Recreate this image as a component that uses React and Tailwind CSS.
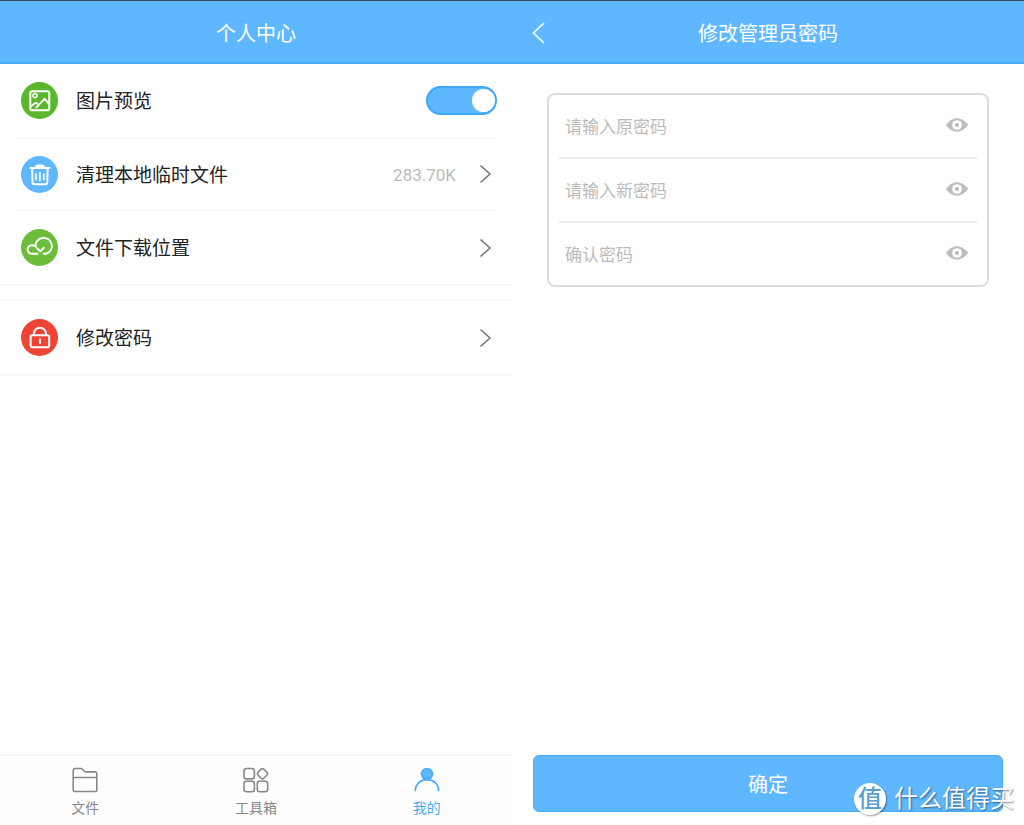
import { useState } from "react";

const Round = ({ className, children }) => (
  <span className={`flex size-[37px] shrink-0 items-center justify-center rounded-full ${className}`}>
    <svg viewBox="0 0 37 37" className="size-full" fill="none" stroke="white" strokeWidth="2" strokeLinecap="round" strokeLinejoin="round" aria-hidden="true">
      {children}
    </svg>
  </span>
);

const PictureIcon = () => (
  <Round className="bg-[#5ab62a]">
    <rect x="9.3" y="9.200" width="19" height="19" rx="1.800" />
    <circle cx="14" cy="13.600" r="2" strokeWidth="1.600" />
    <path d="M10 24.200l5-3.600 2.800 2.400 5.800-6.400 4.400 5.600M15.200 25.600l2.600-2.600" strokeWidth="1.800" />
  </Round>
);

const TrashIcon = () => (
  <Round className="bg-[#5fb8ff]">
    <path d="M9.300 12h19.200" strokeWidth="2.200" />
    <path d="M14 11.400l1.400-2.400h7l1.400 2.400z" fill="white" strokeWidth="1" />
    <path d="M11.200 13l.3 13.200a2 2 0 0 0 2 2h10.800a2 2 0 0 0 2-2l.3-13.200" />
    <path d="M15 18v5.500M18.900 16.500v8M22.800 18v5.500" strokeWidth="1.700" />
  </Round>
);

const CloudIcon = () => (
  <Round className="bg-[#6bbd3a]">
    <path d="M16.300 24.800h-5.200a4.300 4.300 0 0 1-.4-8.600c1.600-.1 3 .3 4.400 1.500" />
    <path d="M14.300 16.600c.6-4.600 3.900-7.600 8.400-7.600a8 8 0 0 1 4 15c-1.200.6-2.500.8-4 .8" />
    <path d="M16.300 19.600l3.200 2.800 3.300-3.600" />
  </Round>
);

const LockIcon = () => (
  <Round className="bg-[#ee4433]">
    <rect x="9.600" y="16.200" width="18.600" height="12" rx="1.800" />
    <path d="M12.800 16v-1.200a6.100 6.100 0 0 1 12.200 0V16" />
    <path d="M19 20.500v3.500" />
  </Round>
);

const Chevron = () => (
  <svg viewBox="0 0 14 20" className="h-5 w-3.5 shrink-0" fill="none" stroke="#777" strokeWidth="1.600" aria-hidden="true">
    <path d="M2.500 1.500l9.500 8.500-9.500 8.500" />
  </svg>
);

const Eye = () => (
  <svg viewBox="0 0 24 16" className="h-4 w-6" aria-hidden="true">
    <path d="M.8 8C4.500 3.300 8 1.300 12 1.300S19.500 3.300 23.200 8c-3.700 4.700-7.200 6.700-11.200 6.700S4.500 12.700.8 8z" fill="#bdbdbd" />
    <circle cx="12" cy="8" r="4.800" fill="white" />
    <circle cx="12" cy="8" r="2" fill="#b5b5b5" />
  </svg>
);

const Header = ({ title, back }) => (
  <header className="relative flex h-16 items-center justify-center border-t border-b-2 border-t-[#33485c] border-b-[#4bacfb] bg-[#5fb8ff] pt-1 text-white">
    {back && (
      <button type="button" aria-label="返回" className="absolute left-4 flex size-7 items-center justify-center">
        <svg viewBox="0 0 28 28" className="size-7" fill="none" stroke="white" strokeWidth="1.700" aria-hidden="true">
          <path d="M16 3L5.500 13 16 23" />
        </svg>
      </button>
    )}
    <h1 className="text-xl">{title}</h1>
  </header>
);

const Row = ({ icon, label, value }) => (
  <button type="button" className="flex h-full w-full items-center pr-5 pl-[21px] text-left">
    {icon}
    <span className="ml-[18px] flex-1 pt-1">{label}</span>
    {value && <span className="mr-[22px] pt-1 text-[17px] text-[#bbb]">{value}</span>}
    <Chevron />
  </button>
);

const Tab = ({ label, active, children }) => (
  <a href="#" aria-current={active ? "page" : undefined} className={`flex flex-1 flex-col items-center gap-1 pt-2.5 text-sm ${active ? "text-[#4aacf8]" : "text-[#888]"}`}>
    <svg viewBox="0 0 28 28" className="size-7" fill="none" stroke="currentColor" strokeWidth="1.600" strokeLinejoin="round" aria-hidden="true">
      {children}
    </svg>
    {label}
  </a>
);

const PasswordField = ({ id, label, last }) => {
  const [shown, setShown] = useState(false);
  return (
    <div className={`flex items-center pr-2 pl-1.5 ${last ? "h-[62px]" : "h-16 border-b-2 border-[#e9e9e9]"}`}>
      <input id={id} type={shown ? "text" : "password"} aria-label={label} placeholder={label} className="h-10 min-w-0 flex-1 pt-0.5 text-[17px] leading-8 outline-none placeholder:text-[#bbb]" />
      <button type="button" aria-label="显示密码" className="pb-0.5" onClick={() => setShown(!shown)}>
        <Eye />
      </button>
    </div>
  );
};

export default function App() {
  return (
    <div className="relative grid min-h-screen grid-cols-2 overflow-hidden bg-white font-['Roboto','Noto_Sans_CJK_SC',sans-serif] text-[#222]">
      <section className="flex flex-col">
        <Header title="个人中心" />
        <main className="flex-1 text-[19px]">
          <ul className="border-b-2 border-[#f6f6f6]">
            <li className="flex h-[73px] items-center pr-[15px] pl-[21px]">
              <PictureIcon />
              <label htmlFor="preview" className="ml-[18px] flex-1 pt-1">图片预览</label>
              <input id="preview" type="checkbox" role="switch" defaultChecked className="flex h-[29px] w-[71px] appearance-none items-center rounded-full border-2 border-[#ccc] bg-[#ccc] before:size-[23px] before:rounded-full before:bg-white checked:justify-end checked:border-[#40a8fb] checked:bg-[#5fb8ff]" />
            </li>
            <li aria-hidden="true" className="mx-[18px] h-0.5 bg-[#f6f6f6]" />
            <li className="h-[70px]">
              <Row icon={<TrashIcon />} label="清理本地临时文件" value="283.70K" />
            </li>
            <li aria-hidden="true" className="mx-[18px] h-0.5 bg-[#f6f6f6]" />
            <li className="h-[73px]">
              <Row icon={<CloudIcon />} label="文件下载位置" />
            </li>
          </ul>
          <ul className="mt-[13px] border-y-2 border-[#f6f6f6]">
            <li className="h-[73px]">
              <Row icon={<LockIcon />} label="修改密码" />
            </li>
          </ul>
        </main>
        <nav className="flex h-[71px] border-t-2 border-[#f4f4f4] bg-[#fdfdfd]">
          <Tab label="文件">
            <path d="M2.200 24V4.500a2 2 0 0 1 2-2h5.500c1 0 1.400.4 2 1.100l1.300 1.500c.5.600 1 .8 1.800.8h9a2 2 0 0 1 2 2V24a1.500 1.500 0 0 1-1.500 1.500H3.700A1.500 1.500 0 0 1 2.200 24zM2.200 11.500h23.600" />
          </Tab>
          <Tab label="工具箱">
            <rect x="2" y="2.500" width="10.400" height="10.400" rx="2.500" />
            <rect x="2" y="15.300" width="10.400" height="10.400" rx="2.500" />
            <rect x="15.300" y="15.300" width="10.400" height="10.400" rx="2.500" />
            <rect x="16.400" y="3.600" width="8.200" height="8.200" rx="1.800" transform="rotate(45 20.500 7.700)" />
          </Tab>
          <Tab label="我的" active>
            <circle cx="14" cy="8" r="5.500" fill="#5fb8ff" />
            <path d="M2.300 25.200C2.300 18 7.500 13.600 14 13.600S25.700 18 25.700 25.200" strokeWidth="1.700" />
          </Tab>
        </nav>
      </section>

      <section className="flex flex-col">
        <Header title="修改管理员密码" back />
        <form className="flex flex-1 flex-col" onSubmit={(e) => e.preventDefault()}>
          <div className="mx-[35px] mt-[29px] rounded-lg border-2 border-[#dcdcdc] px-2.5">
            <PasswordField id="old" label="请输入原密码" />
            <PasswordField id="new" label="请输入新密码" />
            <PasswordField id="confirm" label="确认密码" last />
          </div>
          <button type="submit" className="mx-[21px] mt-auto mb-[13px] h-[57px] rounded-md border border-[#45abfb] bg-[#5fb8ff] pt-0.5 text-xl text-white">确定</button>
        </form>
      </section>

      <div className="pointer-events-none absolute right-2.5 bottom-2.5 flex items-center gap-2 text-2xl text-white">
        <span className="flex size-8 items-center justify-center rounded-full bg-white text-[24px] font-medium text-[#5a9fd0] shadow-[1px_1px_2px_rgba(0,0,0,0.4)]">值</span>
        <span className="[text-shadow:1px_1px_2px_rgba(0,0,0,0.5)]">什么值得买</span>
      </div>
    </div>
  );
}
